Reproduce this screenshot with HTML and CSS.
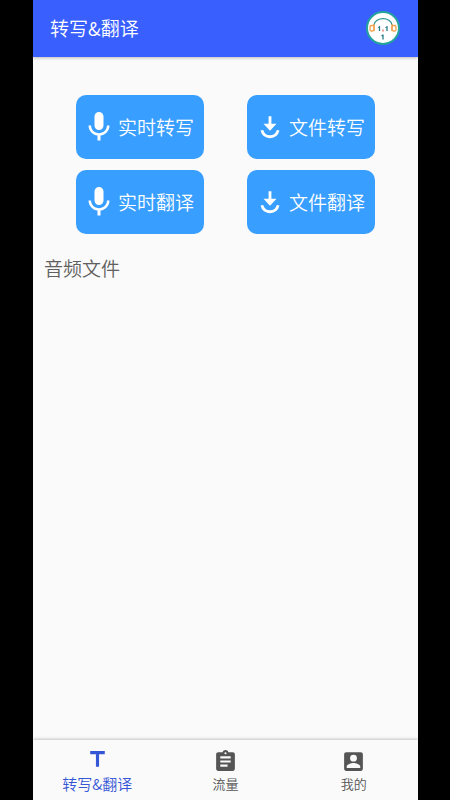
FILE: index.html
```html
<!DOCTYPE html>
<html lang="zh-CN">
<head>
<meta charset="utf-8">
<meta name="viewport" content="width=device-width, initial-scale=1">
<title>转写&amp;翻译</title>
<link rel="stylesheet" href="styles.css">
</head>
<body>
<svg class="defs" aria-hidden="true">
  <symbol id="mic" viewBox="0 0 24 24"><path d="M12 14c1.66 0 3-1.34 3-3V5c0-1.66-1.34-3-3-3S9 3.34 9 5v6c0 1.66 1.34 3 3 3zm5.3-3c0 3-2.54 5.1-5.3 5.1S6.700 14 6.700 11H5c0 3.410 2.720 6.230 6 6.720V21h2v-3.280c3.280-.480 6-3.300 6-6.720h-1.700z"/></symbol>
  <symbol id="download" viewBox="0 0 24 24"><path d="M10.700 2h2.600v7h4.700l-6 6.500-6-6.500h4.700z"/><path d="M4.500 15c2 8 13 8 15 0" fill="none" stroke="currentColor" stroke-width="2.600"/></symbol>
</svg>
<div class="app">
  <header class="bar">
    <h1 class="title">转写&amp;翻译</h1>
    <button class="avatar" type="button" aria-label="客服">
      <svg viewBox="0 0 36 36">
        <circle cx="18" cy="18" r="16" fill="#fff" stroke="#24a29c" stroke-width="2"/>
        <g fill="none" stroke-width="1.300">
          <path d="M9 15C10 6.500 26 6.500 27 15" stroke="#2b958f"/>
          <path d="M9 14v7M27 14v7" stroke="#eda04d"/>
          <rect x="5" y="15.500" width="4" height="5.500" rx="1.500" stroke="#eda04d"/>
          <rect x="27" y="15.500" width="4" height="5.500" rx="1.500" stroke="#eda04d"/>
          <path d="M14.500 16v5M22 16v5M18 24.500v5M13 17.500l1.500-1M20.500 17.500l1.500-1M16.500 26l1.500-1" stroke="#277f88"/>
          <path d="M18 19.500v2" stroke="#e36f58"/>
        </g>
      </svg>
    </button>
  </header>
  <main class="content">
    <div class="actions">
      <button class="action" type="button"><svg class="mic"><use href="#mic"/></svg><span>实时转写</span></button>
      <button class="action" type="button"><svg class="download"><use href="#download"/></svg><span>文件转写</span></button>
      <button class="action" type="button"><svg class="mic"><use href="#mic"/></svg><span>实时翻译</span></button>
      <button class="action" type="button"><svg class="download"><use href="#download"/></svg><span>文件翻译</span></button>
    </div>
    <h2 class="section">音频文件</h2>
  </main>
  <nav class="tabs">
    <a class="tab active" href="#home"><svg viewBox="0 0 24 24"><path d="M5 2v3h5.500v12h3V5H19V2z"/></svg><span>转写&amp;翻译</span></a>
    <a class="tab" href="#usage"><svg viewBox="0 0 24 24"><path d="M19 3h-4.180C14.400 1.840 13.300 1 12 1c-1.300 0-2.400.840-2.820 2H5c-1.100 0-2 .900-2 2v14c0 1.100.900 2 2 2h14c1.100 0 2-.900 2-2V5c0-1.100-.900-2-2-2zm-7 0c.550 0 1 .450 1 1s-.450 1-1 1-1-.450-1-1 .450-1 1-1zm2 14H7v-2h7v2zm3-4H7v-2h10v2zm0-4H7V7h10v2z"/></svg><span>流量</span></a>
    <a class="tab" href="#me"><svg viewBox="0 0 24 24"><path d="M3 5v14c0 1.100.890 2 2 2h14c1.100 0 2-.900 2-2V5c0-1.100-.900-2-2-2H5c-1.110 0-2 .900-2 2zm12.300 3.800a3.300 3.300 0 0 1-6.600 0 3.300 3.300 0 0 1 6.600 0zM5.500 17c0-2.300 4.300-3.500 6.500-3.500s6.500 1.200 6.500 3.500v1.200h-13V17z"/></svg><span>我的</span></a>
  </nav>
</div>
</body>
</html>
```
FILE: styles.css
```css
* {
  box-sizing: border-box;
}

body {
  margin: 0;
  padding: 0 32px 0 33px;
  background: #000;
  font-family: "Noto Sans CJK SC", sans-serif;
  font-weight: 350;
}

svg {
  fill: currentColor;
}

.defs {
  display: none;
}

.app {
  display: flex;
  flex-direction: column;
  min-height: 100vh;
  background: #fafafa;
}

.bar {
  display: flex;
  align-items: center;
  justify-content: space-between;
  height: 57px;
  padding: 0 17px 2px;
  background: #3960ff;
  color: #fff;
  box-shadow: 0 1px 3px rgba(0, 0, 0, 0.25);
}

.title {
  margin: 0;
  font-size: 19px;
  font-weight: inherit;
  line-height: 28px;
}

.avatar {
  width: 36px;
  height: 36px;
  padding: 0;
  border: 0;
  background: none;
}

.avatar svg {
  display: block;
  width: 100%;
  height: 100%;
}

.content {
  flex: 1;
  padding-top: 38px;
}

.actions {
  display: grid;
  grid-template-columns: repeat(2, 128px);
  justify-content: space-evenly;
  row-gap: 11px;
}

.action {
  display: flex;
  align-items: center;
  gap: 1px;
  height: 64px;
  padding: 0 0 0 5px;
  border: 0;
  border-radius: 10px;
  background: #389eff;
  color: #fff;
  font: inherit;
  font-size: 19px;
  line-height: 28px;
  white-space: nowrap;
}

.mic {
  width: 36px;
  height: 36px;
}

.download {
  width: 26px;
  height: 26px;
  margin: 0 5px;
}

.section {
  margin: 20px 11px;
  color: #606060;
  font-size: 19px;
  font-weight: inherit;
  line-height: 28px;
}

.tabs {
  display: grid;
  grid-template-columns: repeat(3, 1fr);
  height: 60px;
  background: #fafafa;
  box-shadow: 0 -1px 3px rgba(0, 0, 0, 0.22);
}

.tab {
  display: flex;
  flex-direction: column;
  align-items: center;
  padding-top: 9px;
  color: #555;
  font-size: 13px;
  line-height: 20px;
  text-decoration: none;
}

.tab svg {
  width: 25px;
  height: 25px;
}

.active {
  color: #3557d6;
  font-size: 15px;
}
```
